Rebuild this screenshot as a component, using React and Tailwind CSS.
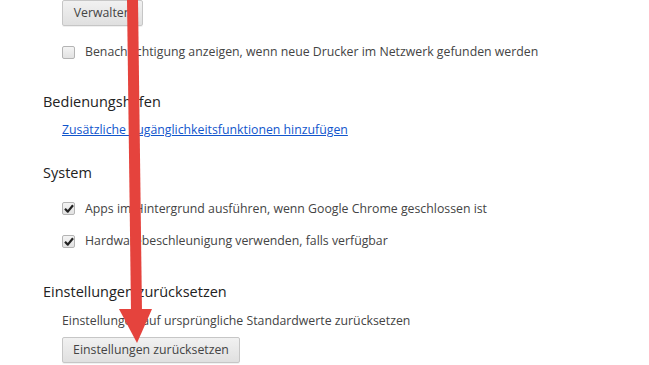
import React from "react";

function Checkbox({ checked }) {
    return (
        <span className="w-[13px] h-[13px] shrink-0 rounded-[2px] border border-[#b4b4b4] bg-gradient-to-b from-[#f4f4f4] to-[#e2e2e2] flex items-center justify-center">
            {checked && (
                <svg width="10" height="9" viewBox="0 0 10 9">
                    <path d="M1 4.8 L3.8 7.6 L9 1.2" fill="none" stroke="#222" strokeWidth="2.2" strokeLinejoin="round" />
                </svg>
            )}
        </span>
    );
}

function CheckRow({ checked, children, className = "" }) {
    return (
        <label className={"flex items-center gap-[10px] pl-[19px] text-[12.3px] text-[#444] whitespace-nowrap " + className}>
            <Checkbox checked={checked} />
            <span>{children}</span>
        </label>
    );
}

function Button({ children, className = "" }) {
    return (
        <button className={"h-[26px] px-[10px] rounded-[2px] border border-[#c6c6c6] bg-gradient-to-b from-[#f1f1f1] to-[#e0e0e0] text-[12.3px] text-[#444] whitespace-nowrap shadow-[0_1px_0_rgba(0,0,0,0.06)] " + className}>
            {children}
        </button>
    );
}

export default function App() {
    return (
        <div
            className="relative w-[649px] h-[365px] overflow-hidden bg-white"
            style={{ fontFamily: '"Open Sans", "Noto Sans", sans-serif' }}
        >
            <main className="pl-[43px] flex flex-col">
                <div className="pl-[19px] -mt-[1px]">
                    <Button className="w-[81px]">Verwalten</Button>
                </div>
                <CheckRow className="mt-[17px]">
                    Benachrichtigung anzeigen, wenn neue Drucker im Netzwerk gefunden werden
                </CheckRow>

                <h2 className="mt-[30px] text-[14.5px] text-[#222] leading-[20px]">Bedienungshilfen</h2>
                <a href="#" className="mt-[9px] ml-[19px] text-[12.3px] text-[#1155cc] underline leading-[18px] self-start">
                    Zusätzliche Zugänglichkeitsfunktionen hinzufügen
                </a>

                <h2 className="mt-[24px] text-[14.5px] text-[#222] leading-[20px]">System</h2>
                <CheckRow checked className="mt-[17px]">
                    Apps im Hintergrund ausführen, wenn Google Chrome geschlossen ist
                </CheckRow>
                <CheckRow checked className="mt-[14px]">
                    Hardwarebeschleunigung verwenden, falls verfügbar
                </CheckRow>

                <h2 className="mt-[31px] text-[14.5px] text-[#222] leading-[20px]">Einstellungen zurücksetzen</h2>
                <p className="mt-[10px] ml-[19px] text-[12.3px] text-[#444] leading-[18px]">
                    Einstellungen auf ursprüngliche Standardwerte zurücksetzen
                </p>
                <div className="pl-[19px] mt-[6px]">
                    <Button className="w-[178px]">Einstellungen zurücksetzen</Button>
                </div>
            </main>

            <svg className="absolute inset-0 pointer-events-none" width="649" height="365" viewBox="0 0 649 365">
                <polygon points="127,0 138,0 142,312 131,312" fill="#e5433d" />
                <polygon points="119,309 152,309 137,343" fill="#e5433d" />
            </svg>
        </div>
    );
}
